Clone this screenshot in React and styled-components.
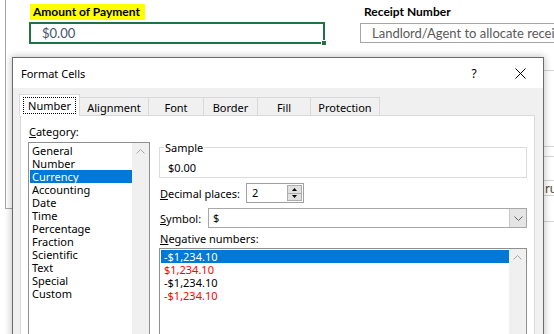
import React from "react";
import styled, { createGlobalStyle } from "styled-components";

const GlobalStyle = createGlobalStyle`
  html, body { margin: 0; padding: 0; background: #fff; overflow: hidden; }
  * { box-sizing: border-box; }
`;

const UI = `"Noto Sans", "Liberation Sans", sans-serif`;
const SHEET = `Lato, "Liberation Sans", sans-serif`;

const Page = styled.div`
  position: relative;
  width: 554px;
  height: 334px;
  overflow: hidden;
  display: flex;
  align-items: flex-start;
  background: #fff;
`;

const LeftRule = styled.div`
  flex: none;
  margin-left: 5px;
  width: 8px;
  height: 209px;
  border-left: 1px solid #a6a6a6;
  border-bottom: 1px solid #a6a6a6;
`;

const Sheet = styled.div`
  flex: 1;
  min-width: 0;
  display: flex;
  flex-direction: column;
`;

const FieldRow = styled.div`
  height: 46px;
  display: flex;
  padding-top: 4px;
`;

const Field = styled.div`
  display: flex;
  flex-direction: column;
  align-items: flex-start;
  margin-left: ${(p) => p.$offset}px;
  flex: none;
`;

const FieldLabel = styled.div`
  height: 16px;
  line-height: 16px;
  padding: 0 5px 0 3px;
  margin-left: 1px;
  font-family: ${SHEET};
  font-weight: 700;
  font-size: 12px;
  color: #000;
  background: ${(p) => (p.$highlight ? "#ffff00" : "transparent")};
`;

const ActiveCell = styled.div`
  position: relative;
  margin-top: 2px;
  width: 296px;
  height: 22px;
  border: 2px solid #217346;
  padding-left: 11px;
  font-family: ${SHEET};
  font-size: 13px;
  line-height: 18px;
  color: #44546a;
`;

const FillHandle = styled.span`
  position: absolute;
  right: -4px;
  bottom: -4px;
  width: 6px;
  height: 6px;
  background: #217346;
  border: 1px solid #fff;
`;

const InputCell = styled.div`
  margin-top: 3px;
  width: 220px;
  height: 20px;
  border: 1px solid #a6a6a6;
  border-right: none;
  padding-left: 11px;
  font-family: ${SHEET};
  font-size: 13px;
  line-height: 18px;
  color: #595959;
  white-space: nowrap;
  overflow: hidden;
`;

const GridStrip = styled.div`
  align-self: flex-end;
  width: 10px;
  display: flex;
  flex-direction: column;
`;

const GridRow = styled.div`
  height: ${(p) => p.$h}px;
  border-bottom: 1px solid #d4d4d4;
  font-family: ${SHEET};
  font-size: 13px;
  line-height: 14px;
  color: #5b5040;
  white-space: nowrap;
  overflow: hidden;
  padding-left: 1px;
`;

/* ---------- dialog ---------- */

const Dialog = styled.div`
  position: absolute;
  left: 12px;
  top: 57px;
  width: 532px;
  height: 300px;
  border: 1px solid #6b6b6b;
  background: #f0f0f0;
  box-shadow: 0 0 7px 1px rgba(0, 0, 0, 0.22);
  font-family: ${UI};
  font-size: 11px;
  color: #000;
  display: flex;
  flex-direction: column;
`;

const TitleBar = styled.div`
  height: 30px;
  flex: none;
  background: #fff;
  display: flex;
  align-items: center;
  padding-left: 8px;
`;

const Title = styled.div`
  font-size: 11px;
  flex: 1;
`;

const TitleButton = styled.div`
  width: 46px;
  height: 30px;
  display: flex;
  align-items: center;
  justify-content: center;
  font-size: 12px;
  color: #000;
`;

const Body = styled.div`
  flex: 1;
  padding: 6px 8px 0 7px;
  display: flex;
  flex-direction: column;
`;

const TabRow = styled.div`
  height: 21px;
  display: flex;
  align-items: flex-end;
  margin-left: -1px;
`;

const Tab = styled.div`
  position: relative;
  width: ${(p) => p.$w}px;
  height: ${(p) => (p.$active ? 22 : 18)}px;
  margin-bottom: ${(p) => (p.$active ? -1 : 0)}px;
  z-index: ${(p) => (p.$active ? 1 : 0)};
  background: ${(p) => (p.$active ? "#fff" : "#f0f0f0")};
  border-top: 1px solid #d9d9d9;
  border-right: 1px solid #d9d9d9;
  border-left: ${(p) => (p.$active ? "1px solid #d9d9d9" : "none")};
  display: flex;
  align-items: center;
  justify-content: center;
  font-size: 11px;
  line-height: 13px;
  padding-top: ${(p) => (p.$active ? 0 : 1)}px;
`;

const Focus = styled.span`
  outline: 1px dotted #000;
  outline-offset: 1px;
  padding: 0 3px;
`;

const Panel = styled.div`
  flex: 1;
  background: #fff;
  border: 1px solid #d9d9d9;
  display: flex;
  gap: 9px;
  padding: 9px 7px 0 7px;
`;

const LeftCol = styled.div`
  width: 122px;
  flex: none;
  display: flex;
  flex-direction: column;
`;

const RightCol = styled.div`
  width: 368px;
  flex: none;
  display: flex;
  flex-direction: column;
  padding-top: 16px;
`;

const Label = styled.div`
  line-height: 13px;
  margin-left: 1px;
  width: ${(p) => (p.$w ? `${p.$w}px` : "auto")};
  flex: none;
  white-space: nowrap;
  u { text-decoration: underline; text-underline-offset: 1px; }
`;

const ListBox = styled.div`
  margin-top: ${(p) => p.$mt}px;
  height: 200px;
  border: 1px solid #8e8f8f;
  display: flex;
`;

const ListItems = styled.div`
  flex: 1;
  padding-top: 1px;
  display: flex;
  flex-direction: column;
`;

const ListItem = styled.div`
  height: 13px;
  line-height: 13px;
  margin-left: 1px;
  padding-left: ${(p) => p.$pad}px;
  white-space: nowrap;
  background: ${(p) => (p.$selected ? "#0078d7" : "transparent")};
  color: ${(p) => (p.$selected ? "#fff" : p.$red ? "#ff0000" : "#000")};
`;

const ScrollTrack = styled.div`
  width: 17px;
  flex: none;
  background: #f0f0f0;
  display: flex;
  flex-direction: column;
  align-items: center;
`;

const ScrollArrow = styled.div`
  width: 17px;
  height: 17px;
  display: flex;
  align-items: center;
  justify-content: center;
`;

const GroupBox = styled.fieldset`
  margin: 0;
  border: 1px solid #dcdcdc;
  padding: 7px 8px 3px 8px;
  min-width: 0;
`;

const Legend = styled.legend`
  padding: 0 1px;
  margin-left: -4px;
  line-height: 13px;
`;

const SampleValue = styled.div`
  line-height: 13px;
`;

const FormRow = styled.div`
  display: flex;
  align-items: center;
  margin-top: ${(p) => p.$mt}px;
`;

const SpinBox = styled.div`
  width: 58px;
  height: 20px;
  border: 1px solid #a0a0a0;
  display: flex;
  align-items: stretch;
  padding: 1px;
`;

const SpinValue = styled.div`
  flex: 1;
  padding-left: 4px;
  line-height: 16px;
`;

const SpinButtons = styled.div`
  width: 15px;
  display: flex;
  flex-direction: column;
`;

const SpinButton = styled.div`
  flex: 1;
  background: #e1e1e1;
  border: 1px solid #adadad;
  margin-top: ${(p) => (p.$down ? -1 : 0)}px;
  display: flex;
  align-items: center;
  justify-content: center;
`;

const Combo = styled.div`
  width: 319px;
  height: 20px;
  border: 1px solid #a8a8a8;
  display: flex;
  align-items: stretch;
`;

const ComboValue = styled.div`
  flex: 1;
  padding-left: 4px;
  line-height: 18px;
`;

const ComboButton = styled.div`
  width: 17px;
  background: #e5e5e5;
  border-left: 1px solid #c8c8c8;
  display: flex;
  align-items: center;
  justify-content: center;
`;

const Chevron = ({ up }) => (
  <svg width="9" height="5" viewBox="0 0 9 5">
    <polyline
      points={up ? "0.5,4.5 4.5,0.5 8.5,4.5" : "0.5,0.5 4.5,4.5 8.5,0.5"}
      fill="none"
      stroke={up ? "#a6a6a6" : "#606060"}
      strokeWidth="1"
    />
  </svg>
);

const Tri = ({ down }) => (
  <svg width="5" height="3" viewBox="0 0 5 3">
    <polygon points={down ? "0,0 5,0 2.5,3" : "0,3 5,3 2.5,0"} fill="#000" />
  </svg>
);

const categories = [
  "General",
  "Number",
  "Currency",
  "Accounting",
  "Date",
  "Time",
  "Percentage",
  "Fraction",
  "Scientific",
  "Text",
  "Special",
  "Custom",
];

const negatives = [
  { text: "-$1,234.10", selected: true },
  { text: "$1,234.10", red: true },
  { text: "-$1,234.10" },
  { text: "-$1,234.10", red: true },
];

const tabs = [
  { name: "Number", w: 61, active: true },
  { name: "Alignment", w: 69 },
  { name: "Font", w: 55 },
  { name: "Border", w: 54 },
  { name: "Fill", w: 53 },
  { name: "Protection", w: 69 },
];

export default function App() {
  return (
    <>
      <GlobalStyle />
      <Page>
        <LeftRule />
        <Sheet>
          <FieldRow>
            <Field $offset={16}>
              <FieldLabel $highlight>Amount of Payment</FieldLabel>
              <ActiveCell>
                $0.00
                <FillHandle />
              </ActiveCell>
            </Field>
            <Field $offset={35}>
              <FieldLabel>Receipt Number</FieldLabel>
              <InputCell>Landlord/Agent to allocate receipt number</InputCell>
            </Field>
          </FieldRow>
          <GridStrip>
            <GridRow $h={25} />
            <GridRow $h={76} />
            <GridRow $h={10} />
            <GridRow $h={24} />
            <GridRow $h={15}>ru</GridRow>
            <GridRow $h={26} />
          </GridStrip>
        </Sheet>

        <Dialog>
          <TitleBar>
            <Title>Format Cells</Title>
            <TitleButton>?</TitleButton>
            <TitleButton>
              <svg width="11" height="11" viewBox="0 0 11 11">
                <path d="M0.5 0.5 L10.5 10.5 M10.5 0.5 L0.5 10.5" stroke="#000" strokeWidth="1" />
              </svg>
            </TitleButton>
          </TitleBar>
          <Body>
            <TabRow>
              {tabs.map((t) => (
                <Tab key={t.name} $w={t.w} $active={t.active}>
                  {t.active ? <Focus>{t.name}</Focus> : t.name}
                </Tab>
              ))}
            </TabRow>
            <Panel>
              <LeftCol>
                <Label>
                  <u>C</u>ategory:
                </Label>
                <ListBox $mt={4}>
                  <ListItems>
                    {categories.map((c) => (
                      <ListItem key={c} $pad={2} $selected={c === "Currency"}>
                        {c}
                      </ListItem>
                    ))}
                  </ListItems>
                  <ScrollTrack>
                    <ScrollArrow>
                      <Chevron up />
                    </ScrollArrow>
                  </ScrollTrack>
                </ListBox>
              </LeftCol>
              <RightCol>
                <GroupBox>
                  <Legend>Sample</Legend>
                  <SampleValue>$0.00</SampleValue>
                </GroupBox>
                <FormRow $mt={5}>
                  <Label $w={86}>
                    <u>D</u>ecimal places:
                  </Label>
                  <SpinBox>
                    <SpinValue>2</SpinValue>
                    <SpinButtons>
                      <SpinButton>
                        <Tri />
                      </SpinButton>
                      <SpinButton $down>
                        <Tri down />
                      </SpinButton>
                    </SpinButtons>
                  </SpinBox>
                </FormRow>
                <FormRow $mt={5}>
                  <Label $w={48}>
                    <u>S</u>ymbol:
                  </Label>
                  <Combo>
                    <ComboValue>$</ComboValue>
                    <ComboButton>
                      <Chevron />
                    </ComboButton>
                  </Combo>
                </FormRow>
                <FormRow $mt={4}>
                  <Label>
                    <u>N</u>egative numbers:
                  </Label>
                </FormRow>
                <ListBox $mt={3}>
                  <ListItems>
                    {negatives.map((n, i) => (
                      <ListItem key={i} $pad={3} $selected={n.selected} $red={n.red}>
                        {n.text}
                      </ListItem>
                    ))}
                  </ListItems>
                  <ScrollTrack>
                    <ScrollArrow>
                      <Chevron up />
                    </ScrollArrow>
                  </ScrollTrack>
                </ListBox>
              </RightCol>
            </Panel>
          </Body>
        </Dialog>
      </Page>
    </>
  );
}
